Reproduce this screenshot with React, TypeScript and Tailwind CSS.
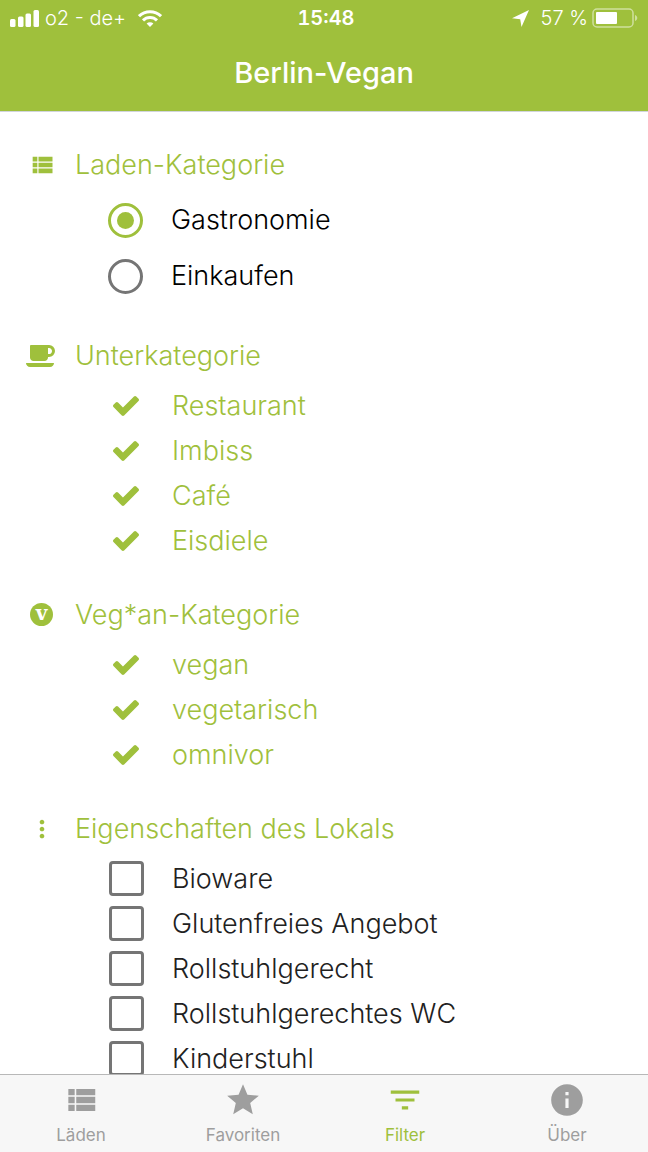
import { useState } from 'react';
import { MdFilterList, MdInfo, MdMoreVert, MdStar } from 'react-icons/md';

const subcategories = ['Restaurant', 'Imbiss', 'Café', 'Eisdiele'];
const veganCategories = ['vegan', 'vegetarisch', 'omnivor'];
const features = ['Bioware', 'Glutenfreies Angebot', 'Rollstuhlgerecht', 'Rollstuhlgerechtes WC', 'Kinderstuhl'];

function ListIcon({ className }: { className?: string }) {
  return (
    <svg viewBox="0 0 24 24" fill="currentColor" className={className} aria-hidden="true">
      <path d="M4 14h4v-4H4v4zm0 5h4v-4H4v4zM4 9h4V5H4v4zm5 5h12v-4H9v4zm0 5h12v-4H9v4zM9 5v4h12V5H9z" />
    </svg>
  );
}

function CupIcon() {
  return (
    <svg viewBox="0 256 1856 1408" fill="currentColor" className="mr-0.5 h-[22px] w-[29px]" aria-hidden="true">
      <path d="M1664 640q0-80-56-136t-136-56h-64v384h64q80 0 136-56t56-136zM0 1408h1792q0 106-75 181t-181 75H256q-106 0-181-75T0 1408zM1856 640q0 159-112.500 271.500T1472 1024h-64v32q0 92-66 158t-158 66H480q-92 0-158-66t-66-158V320q0-26 19-45t45-19h1152q159 0 271.500 112.500T1856 640z" />
    </svg>
  );
}

function CheckIcon({ className }: { className?: string }) {
  return (
    <svg viewBox="121 338 1550 1184" fill="currentColor" className={className} aria-hidden="true">
      <path d="M1671 566q0 40-28 68l-724 724-136 136q-28 28-68 28t-68-28l-136-136-362-362q-28-28-28-68t28-68l136-136q28-28 68-28t68 28l294 295 656-657q28-28 68-28t68 28l136 136q28 28 28 68z" />
    </svg>
  );
}

function StatusBar() {
  return (
    <div className="grid h-9 grid-cols-3 items-center px-[10px] text-xl leading-6">
      <div className="flex items-center gap-1.5">
        <svg viewBox="0 0 29 17" fill="currentColor" className="h-[17px] w-[29px]" aria-hidden="true">
          <rect x="0" y="9" width="5.500" height="8" rx="1.500" />
          <rect x="8" y="6.500" width="5.500" height="10.500" rx="1.500" />
          <rect x="15.500" y="3.500" width="5.500" height="13.500" rx="1.500" />
          <rect x="23.500" y="0" width="5.500" height="17" rx="1.500" />
        </svg>
        <span className="whitespace-nowrap font-[350]">o2 - de+</span>
        <svg viewBox="0 0 24 17" fill="none" stroke="currentColor" strokeWidth="3" className="ml-1.5 h-[17px] w-6" aria-hidden="true">
          <path d="M1 6.200a15.600 15.600 0 0 1 22 0" />
          <path d="M5 10.400a9.900 9.900 0 0 1 14 0" />
          <path d="M12 17l-3.400-3.500a4.900 4.900 0 0 1 6.800 0z" fill="currentColor" stroke="none" />
        </svg>
      </div>
      <div className="pl-1 text-center font-semibold tabular-nums">15:48</div>
      <div className="flex items-center justify-end gap-1">
        <svg viewBox="0 0 17 17" fill="currentColor" className="mr-2 h-[17px] w-[17px]" aria-hidden="true">
          <path d="M17 0L9.500 17L8.200 9.200L0 8.200z" />
        </svg>
        <span className="whitespace-nowrap font-[350]">57 %</span>
        <svg viewBox="0 0 46 20" className="h-5 w-[46px]" aria-hidden="true">
          <rect x="1" y="1" width="40" height="18" rx="4" fill="none" stroke="#fff" strokeOpacity="0.500" strokeWidth="1.500" />
          <rect x="4" y="4" width="21" height="12" rx="1" fill="#fff" />
          <path d="M43 7c3 1 3 5 0 6z" fill="#fff" fillOpacity="0.500" />
        </svg>
      </div>
    </div>
  );
}

function Section({ icon, title, children }: { icon: React.ReactNode; title: string; children: React.ReactNode }) {
  return (
    <fieldset>
      <legend className="flex h-[55px] items-center text-[27px] leading-8 font-[350] text-[#9fc03c]">
        <span className="ml-[22px] mr-[14px] flex w-[39px] justify-center">{icon}</span>
        {title}
      </legend>
      {children}
    </fieldset>
  );
}

function RadioRow({ label, checked, onChange }: { label: string; checked: boolean; onChange: () => void }) {
  return (
    <label className="flex h-14 items-center gap-7 pl-[108px] text-[27px] leading-8 font-[350] text-black">
      <input
        type="radio"
        name="shop"
        checked={checked}
        onChange={onChange}
        className="grid size-[35px] appearance-none place-items-center rounded-full border-3 border-[#757575] checked:border-[#9fc03c] checked:before:size-[17px] checked:before:rounded-full checked:before:bg-[#9fc03c]"
      />
      {label}
    </label>
  );
}

function CheckRow({ label, defaultChecked }: { label: string; defaultChecked?: boolean }) {
  return (
    <label className="flex h-[45px] items-center gap-7 pl-[109px] text-[27px] leading-8 font-[350] text-[#212121] has-checked:text-[#9fc03c]">
      <span className="grid size-[35px] place-items-center">
        <input
          type="checkbox"
          defaultChecked={defaultChecked}
          className="peer col-start-1 row-start-1 size-[35px] appearance-none rounded-[4px] border-3 border-[#757575] checked:border-transparent"
        />
        <CheckIcon className="pointer-events-none invisible col-start-1 row-start-1 mr-0.5 h-5 w-[26px] peer-checked:visible" />
      </span>
      {label}
    </label>
  );
}

const tabs = [
  { label: 'Läden', icon: <ListIcon className="size-[38px]" /> },
  { label: 'Favoriten', icon: <MdStar className="size-[38px]" /> },
  { label: 'Filter', icon: <MdFilterList className="size-[38px]" /> },
  { label: 'Über', icon: <MdInfo className="size-[38px]" /> },
];

export default function App() {
  const [shop, setShop] = useState('Gastronomie');
  const [tab, setTab] = useState('Filter');

  return (
    <div className="flex h-screen flex-col bg-white font-['Inter','Liberation_Sans',sans-serif]">
      <header className="border-b border-gray-300 bg-[#9fc03c] text-white">
        <StatusBar />
        <h1 className="flex h-[75px] items-center justify-center pb-0.5 text-[29px] leading-8 font-medium">Berlin-Vegan</h1>
      </header>

      <main className="flex min-h-0 flex-1 flex-col gap-6 overflow-y-auto pt-[25px] [scrollbar-width:none]">
        <Section icon={<ListIcon className="size-7" />} title="Laden-Kategorie">
          {['Gastronomie', 'Einkaufen'].map((s) => (
            <RadioRow key={s} label={s} checked={shop === s} onChange={() => setShop(s)} />
          ))}
        </Section>
        <Section icon={<CupIcon />} title="Unterkategorie">
          {subcategories.map((s) => (
            <CheckRow key={s} label={s} defaultChecked />
          ))}
        </Section>
        <Section
          icon={
            <span className="flex size-[23px] items-center justify-center rounded-full bg-[#9fc03c] pb-1 font-['DejaVu_Serif',serif] text-xl leading-5 font-bold text-white">
              v
            </span>
          }
          title="Veg*an-Kategorie"
        >
          {veganCategories.map((s) => (
            <CheckRow key={s} label={s} defaultChecked />
          ))}
        </Section>
        <Section icon={<MdMoreVert className="size-7" />} title="Eigenschaften des Lokals">
          {features.map((s) => (
            <CheckRow key={s} label={s} />
          ))}
        </Section>
      </main>

      <nav className="grid h-[78px] shrink-0 grid-cols-4 border-t border-[#b8b8b8] bg-[#f7f7f7]">
        {tabs.map((t) => (
          <button
            key={t.label}
            onClick={() => setTab(t.label)}
            className={`flex flex-col items-center gap-1 pt-[6px] text-[17px] leading-6 ${tab === t.label ? 'text-[#9fc03c]' : 'text-[#9e9e9e]'}`}
          >
            {t.icon}
            {t.label}
          </button>
        ))}
      </nav>
    </div>
  );
}
